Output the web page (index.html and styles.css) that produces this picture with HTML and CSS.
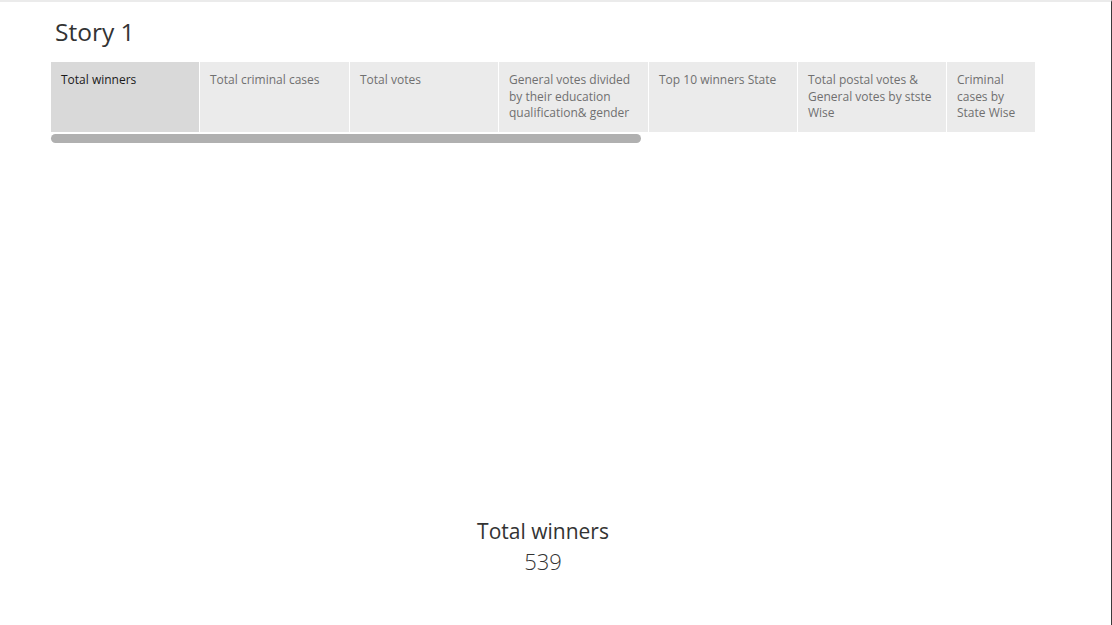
FILE: index.html
```html
<!DOCTYPE html>
<html>
<head>
<meta charset="utf-8">
<link rel="stylesheet" href="styles.css">
</head>
<body>
<div class="frame">
  <div class="story">
    <h1 class="story-title">Story 1</h1>
    <div class="nav">
      <div class="tabs">
        <div class="tab active w148">Total winners</div>
        <div class="tab w149">Total criminal cases</div>
        <div class="tab w148">Total votes</div>
        <div class="tab w149">General votes divided by their education qualification&amp; gender</div>
        <div class="tab w148">Top 10 winners State</div>
        <div class="tab w148">Total postal votes &amp; General votes by stste Wise</div>
        <div class="tab w88">Criminal cases by State Wise</div>
      </div>
      <div class="scroll-track"><div class="scroll-thumb"></div></div>
    </div>
    <div class="sheet">
      <div class="kpi">
        <div class="kpi-label">Total winners</div>
        <div class="kpi-value">539</div>
      </div>
    </div>
  </div>
</div>
</body>
</html>
```

FILE: styles.css
```css
html, body {
  margin: 0;
  padding: 0;
  background: #ffffff;
}
body {
  font-family: "Open Sans", "Noto Sans", "Liberation Sans", sans-serif;
  color: #333333;
}
.frame {
  width: 1111px;
  height: 623px;
  border-top: 2px solid #ebebeb;
  border-right: 1px solid #3a3a3a;
  background: #ffffff;
  overflow: hidden;
}
.story {
  display: flex;
  flex-direction: column;
  height: 100%;
}
.story-title {
  margin: 0;
  padding: 15px 0 0 55px;
  height: 60px;
  box-sizing: border-box;
  font-size: 24.5px;
  font-weight: 400;
  line-height: 30px;
  color: #333333;
}
.nav {
  padding: 0 0 0 51px;
}
.tabs {
  display: flex;
  gap: 1px;
  height: 70px;
}
.tab {
  box-sizing: border-box;
  background: #ebebeb;
  padding: 10px 8px 0 10px;
  font-size: 12px;
  line-height: 16.5px;
  color: #707070;
}
.tab.active {
  background: #d9d9d9;
  color: #1a1a1a;
}
.w148 { width: 148px; }
.w149 { width: 149px; }
.w88 { width: 88px; }
.scroll-track {
  margin-top: 2px;
  height: 9px;
  width: 984px;
}
.scroll-thumb {
  width: 590px;
  height: 9px;
  border-radius: 5px;
  background: #b0b0b0;
}
.sheet {
  flex: 1;
  display: flex;
  justify-content: center;
  width: 1086px;
}
.kpi {
  margin-top: 374px;
  text-align: center;
}
.kpi-label {
  font-size: 21px;
  line-height: 29px;
  color: #333333;
}
.kpi-value {
  font-size: 22px;
  line-height: 30px;
  font-weight: 300;
  color: #333333;
}
```
